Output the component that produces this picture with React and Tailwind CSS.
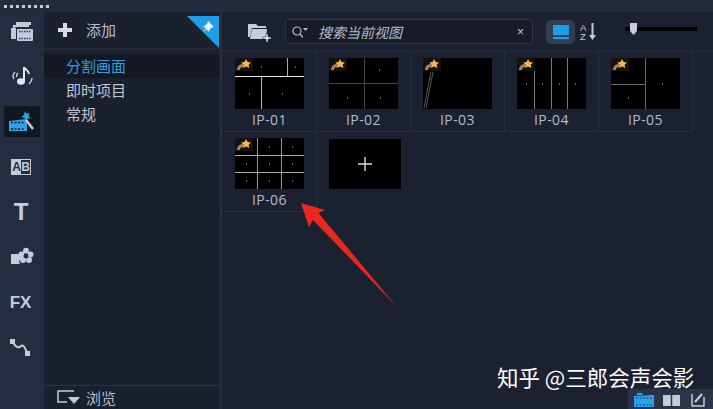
const CJK = { fontFamily: '"Noto Sans CJK SC", sans-serif' };

function Star() {
  return (
    <g>
      <rect x="0" y="0" width="18" height="13" fill="#141210" />
      <path d="M2 12 C2 8 5 6 8 6 L8 9 C6 9 5 10 5 12Z" fill="#a9825a" />
      <path d="M11 1 L12.6 4 L16 4.4 L13.6 6.8 L14.4 10 L11 8.4 L7.8 10 L8.6 6.8 L6.2 4.4 L9.6 4Z" fill="#f7b84a" />
    </g>
  );
}

function Thumb({ lines, dots }) {
  return (
    <svg width="69" height="51" viewBox="0 0 69 51" className="block bg-black">
      {lines.map((l, i) => (
        <line key={i} x1={l[0]} y1={l[1]} x2={l[2]} y2={l[3]} stroke={l[4] || "#b9b9b9"} strokeWidth="1" />
      ))}
      {dots.map((d, i) => (
        <rect key={i} x={d[0]} y={d[1]} width="1" height="2" fill="#666" />
      ))}
      <Star />
    </svg>
  );
}

const items = [
  { n: "IP-01", lines: [[0, 18.5, 69, 18.5, "#eee"], [52.5, 0, 52.5, 18, "#aaa"], [26.5, 19, 26.5, 51, "#bbb"]], dots: [[26, 8], [60, 8], [14, 35], [47, 35]] },
  { n: "IP-02", lines: [[35.5, 0, 35.5, 51, "#444"], [0, 25.5, 69, 25.5, "#444"]], dots: [[50, 11], [18, 39], [51, 39]] },
  { n: "IP-03", lines: [[8, 14, 1, 50, "#555"], [10, 14, 3, 50, "#555"]], dots: [[4, 30], [6, 20]] },
  { n: "IP-04", lines: [[17.5, 0, 17.5, 51, "#777"], [34.5, 0, 34.5, 51, "#777"], [50.5, 0, 50.5, 51, "#777"]], dots: [[9, 25], [25, 25], [42, 25], [58, 25]] },
  { n: "IP-05", lines: [[34.5, 0, 34.5, 51, "#666"], [0, 26.5, 34, 26.5, "#666"]], dots: [[51, 25], [17, 39]] },
];

const six = {
  n: "IP-06",
  lines: [[22.5, 0, 22.5, 51, "#999"], [46.5, 0, 46.5, 51, "#999"], [0, 17.5, 69, 17.5, "#aaa"], [0, 34.5, 69, 34.5, "#aaa"]],
  dots: [[34, 8], [57, 8], [11, 25], [34, 25], [57, 25], [11, 42], [34, 42], [57, 42]],
};

function Cell({ it }) {
  return (
    <div className="w-[94px] h-[80px] border-r border-b border-[#262e40] flex flex-col items-center pt-[6px] shrink-0">
      <Thumb lines={it.lines} dots={it.dots} />
      <div className="mt-[1px] text-[14px] leading-[20px] text-[#b4bccd] tracking-[0.4px]" style={{ fontFamily: '"Open Sans", sans-serif' }}>{it.n}</div>
    </div>
  );
}

const ic = "#c5cbdc";

function NavIcon({ children, active }) {
  return (
    <div className={`w-[36px] h-[31px] flex items-center justify-center ${active ? "bg-[#12161f]" : ""}`}>
      {children}
    </div>
  );
}

export default function App() {
  return (
    <div className="relative w-[713px] h-[409px] overflow-hidden bg-[#1b2130] flex flex-col" style={CJK}>
      <div className="h-[12px] bg-[#232b3f] flex items-start gap-[3px] pt-[5px] pl-[4px] shrink-0">
        {Array.from({ length: 8 }).map((_, i) => (
          <div key={i} className="w-[3px] h-[3px] bg-[#c5cbdc]" />
        ))}
      </div>
      <div className="flex-1 flex min-h-0">
        <div className="w-[44px] bg-[#242c42] flex flex-col items-center pt-[4px] shrink-0 gap-[14.2px]">
          <NavIcon>
            <svg width="24" height="22" viewBox="0 0 24 22">
              <path d="M6 1h15v3H6zM3 4h16v2H5v3H3z" fill={ic} />
              <path d="M1 7h5v11H1z" fill={ic} />
              <rect x="7" y="8" width="16" height="12" rx="1" fill={ic} />
              <path d="M9 10.5h12M9 17.5h12" stroke="#333b50" strokeWidth="1.5" strokeDasharray="1.5 1" />
            </svg>
          </NavIcon>
          <NavIcon>
            <svg width="24" height="24" viewBox="0 0 24 24" fill="none">
              <path d="M14 2v14" stroke="#e4e7f0" strokeWidth="2" />
              <path d="M14 2c1 3 5 3 5 7" stroke="#e4e7f0" strokeWidth="2" />
              <ellipse cx="11" cy="16.5" rx="4" ry="3.3" fill="#e4e7f0" />
              <path d="M5 7c-2 2-3 4-1 7M8 8c-1 1-2 3-1 4" stroke={ic} strokeWidth="1.5" />
              <path d="M22 13c0 3-1 4-3 6" stroke={ic} strokeWidth="1.5" />
            </svg>
          </NavIcon>
          <NavIcon active>
            <svg width="26" height="24" viewBox="0 0 26 24">
              <path d="M0 11l18-2v12H0z" fill="#2aa3ea" />
              <path d="M2 12.5h14M2 19h14" stroke="#12161f" strokeWidth="1.5" strokeDasharray="2 1.5" />
              <path d="M16 1l1.5 2.5 3-.5-1 3 2 2.5-3 0-2 2.5-1-3-3-1 2.5-2z" fill="#2aa3ea" />
              <path d="M17 10l7 9" stroke="#c5cbdc" strokeWidth="2.5" />
            </svg>
          </NavIcon>
          <NavIcon>
            <div className="w-[20px] h-[16px] -ml-[2px] border border-[#c5cbdc] flex text-[12px] leading-[14px] font-bold" style={{ fontFamily: '"Liberation Sans", sans-serif' }}>
              <span className="w-[10px] bg-[#c5cbdc] text-[#242c42] text-center">A</span>
              <span className="w-[9px] text-[#c5cbdc] text-center">B</span>
            </div>
          </NavIcon>
          <NavIcon>
            <span className="text-[24px] leading-none font-bold text-[#c5cbdc] -ml-[2px]" style={{ fontFamily: '"Liberation Sans", sans-serif' }}>T</span>
          </NavIcon>
          <NavIcon>
            <svg width="24" height="20" viewBox="0 0 24 20">
              <path d="M1 7h9l1.5 4-2.5 3 1 3H1z" fill={ic} />
              <g fill={ic}>
                <circle cx="16" cy="3.8" r="3" /><circle cx="20.5" cy="7.6" r="3" /><circle cx="19" cy="13" r="3" /><circle cx="13" cy="13" r="3" /><circle cx="11.5" cy="7.6" r="3" />
              </g>
              <circle cx="16" cy="9" r="2.4" fill="#242c42" />
            </svg>
          </NavIcon>
          <NavIcon>
            <span className="text-[17px] leading-none font-bold text-[#c5cbdc] -ml-[3px]" style={{ fontFamily: '"Liberation Sans", sans-serif' }}>FX</span>
          </NavIcon>
          <NavIcon>
            <svg width="22" height="18" viewBox="0 0 22 18" fill="none" className="-ml-[2px]">
              <rect x="0" y="0" width="5" height="5" fill={ic} />
              <rect x="15" y="12" width="5" height="5" fill={ic} />
              <path d="M3 3c3 6 6 6 8 4s4 1 6 7" stroke={ic} strokeWidth="2" />
            </svg>
          </NavIcon>
        </div>

        <div className="w-[178px] bg-[#1a202d] border-r-2 border-[#262e40] flex flex-col shrink-0">
          <div className="relative h-[38px] border-b-2 border-[#232a3a] flex items-center pl-[14px] gap-[14px] shrink-0">
            <svg width="14" height="14" viewBox="0 0 14 14"><path d="M5 0h4v5h5v4H9v5H5V9H0V5h5z" fill="#d8dce6" /></svg>
            <span className="text-[15px] leading-[20px] text-[#b4bccd]">添加</span>
            <div className="absolute right-0 top-[4px]">
              <svg width="33" height="32" viewBox="0 0 33 32">
                <path d="M0 0H32V32Z" fill="#1d9fe8" />
                <path d="M21 5l6 6-3 1-3 4-1-3-4 3 3-4-3-1 4-3z" fill="#eef3fa" />
              </svg>
            </div>
          </div>
          <div className="flex-1 pt-[4px] flex flex-col text-[15px] leading-[24px]">
            <div className="h-[24px] pl-[22px] bg-[#141822] text-[#2a9fe2] mr-[1px]">分割画面</div>
            <div className="h-[24px] pl-[22px] text-[#c0c6d4]">即时项目</div>
            <div className="h-[24px] pl-[22px] text-[#c0c6d4]">常规</div>
          </div>
          <div className="h-[24px] border-t border-[#2b3344] flex items-center pl-[13px] gap-[5px] shrink-0">
            <svg width="24" height="15" viewBox="0 0 24 15" fill="none">
              <path d="M17 1H1v11h9" stroke={ic} strokeWidth="1.5" />
              <path d="M11 7h12l-6 7z" fill={ic} />
            </svg>
            <span className="text-[15px] leading-[20px] text-[#b4bccd]">浏览</span>
          </div>
        </div>

        <div className="flex-1 flex flex-col min-w-0">
          <div className="h-[40px] flex items-center pl-[25px] pt-[1px] shrink-0 border-b-2 border-[#1f2635]">
            <svg width="25" height="22" viewBox="0 0 25 22" className="shrink-0">
              <path d="M1 3h8l2 2h8v2H5L3 16H1z" fill={ic} />
              <path d="M5 8h15l-1 10H3z" fill={ic} />
              <path d="M19 13h2v3h3v2h-3v3h-2v-3h-3v-2h3z" fill="#e8ebf2" stroke="#1b2130" strokeWidth="0.5" />
            </svg>
            <div className="ml-[13px] w-[248px] h-[25px] rounded-[3px] border border-[#2b3344] bg-[#161b27] flex items-center pl-[6px] pr-[8px]">
              <svg width="16" height="14" viewBox="0 0 16 14" fill="none" className="shrink-0">
                <circle cx="5" cy="6" r="4" stroke="#b4bccd" strokeWidth="1.2" />
                <path d="M8 9l3 3.5" stroke="#b4bccd" strokeWidth="1.2" />
                <path d="M11 3h5l-2.5 3z" fill="#b4bccd" />
              </svg>
              <span className="ml-[10px] text-[14px] leading-[18px] italic text-[#b4bccd]">搜索当前视图</span>
              <span className="ml-auto text-[12px] leading-none text-[#c5cbdc]" style={{ fontFamily: '"Liberation Sans", sans-serif' }}>×</span>
            </div>
            <div className="ml-[13px] w-[29px] h-[24px] rounded-[5px] bg-[#323c54] flex flex-col items-center justify-center gap-[2px] shrink-0">
              <div className="w-[16px] h-[10px] bg-[#1d9fe8]" />
              <div className="w-[16px] h-[2px] bg-[#1d9fe8]" />
            </div>
            <svg width="17" height="19" viewBox="0 0 17 19" className="ml-[5px] shrink-0">
              <text x="0" y="8.5" fontSize="9.5" fill={ic} fontFamily="Liberation Sans">A</text>
              <text x="0" y="18" fontSize="9.5" fill={ic} fontFamily="Liberation Sans">Z</text>
              <path d="M11.5 1h2v12h2.5l-3.5 5-3.5-5h2.5z" fill={ic} />
            </svg>
            <div className="relative ml-[28px] w-[72px] h-[4px] -mt-[6px] bg-black shrink-0">
              <svg width="8" height="12" viewBox="0 0 8 12" className="absolute left-[5px] top-[-4px]">
                <path d="M0 0h7v8l-3.5 4L0 8z" fill="#c5cbdc" />
              </svg>
            </div>
          </div>
          <div className="flex-1 pl-[1px]">
            <div className="flex">
              {items.map((it) => (
                <Cell key={it.n} it={it} />
              ))}
            </div>
            <div className="flex">
              <Cell it={six} />
              <div className="w-[94px] h-[80px] pt-[7px] flex justify-center shrink-0 pl-[2px]">
                <div className="w-[72px] h-[50px] bg-black flex items-center justify-center">
                  <svg width="14" height="14" viewBox="0 0 14 14"><path d="M7 0v14M0 7h14" stroke="#d8dce6" strokeWidth="1.4" /></svg>
                </div>
              </div>
            </div>
          </div>
        </div>
      </div>

      <svg width="110" height="120" viewBox="0 0 110 120" className="absolute left-[295px] top-[196px]">
        <path d="M6 7L30 14 23.5 17 101 110 18 24 14 31Z" fill="#e9271d" />
      </svg>

      <div className="absolute right-0 bottom-0 w-[85px] h-[20px] bg-[#2a3347] flex items-center pl-[6px]">
        <svg width="22" height="16" viewBox="0 0 22 16"><path d="M3 2h5l1 2h-6z" fill="#2aa3ea" /><path d="M0 5l20-1v12H0z" fill="#2aa3ea" /><path d="M2 7h16M2 14h16" stroke="#2a3347" strokeDasharray="2 1.5" /></svg>
        <svg width="17" height="14" viewBox="0 0 17 14" className="ml-[7px]"><path d="M0 3h17v11H0z" fill={ic} /><path d="M8.5 3v11" stroke="#2a3347" strokeWidth="1.5" /></svg>
        <svg width="16" height="16" viewBox="0 0 16 16" fill="none" className="ml-[10px]"><path d="M2 3v12h12V6" stroke={ic} strokeWidth="1.5" /><path d="M5 11l7-8" stroke={ic} strokeWidth="2" /></svg>
      </div>

      <div className="absolute left-[497px] top-[363px] text-[21.5px] leading-[28px] text-white whitespace-nowrap">知乎 @三郎会声会影</div>
    </div>
  );
}
